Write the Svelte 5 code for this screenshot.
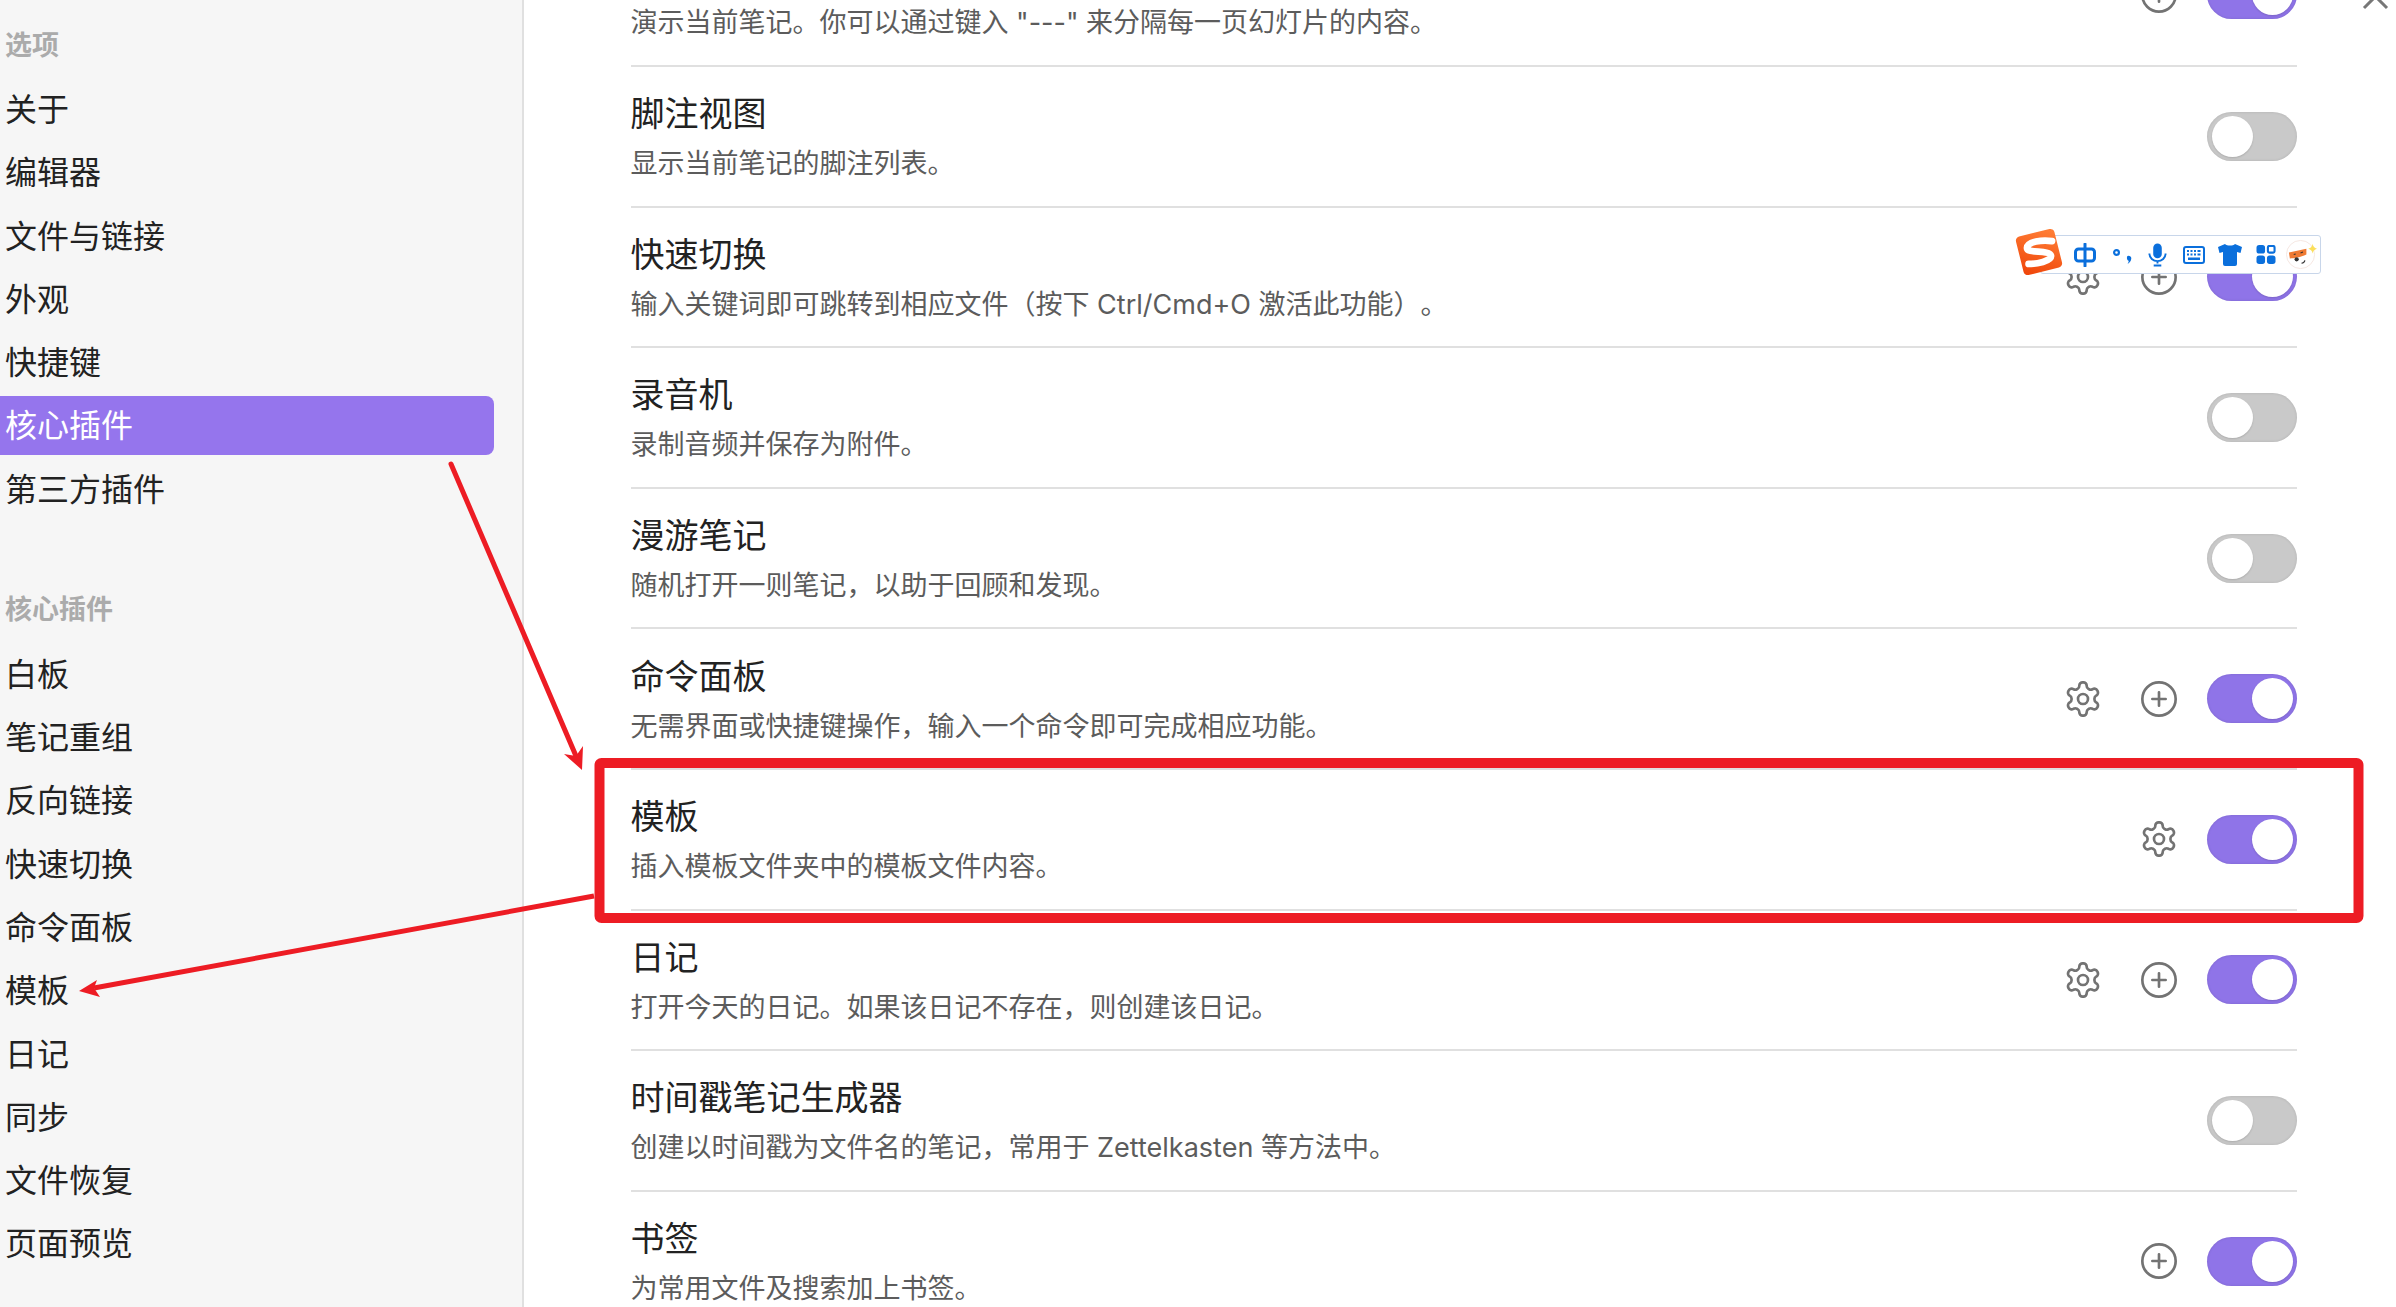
<script>
  const general = ['关于', '编辑器', '文件与链接', '外观', '快捷键', '核心插件', '第三方插件'];
  const core = ['白板', '笔记重组', '反向链接', '快速切换', '命令面板', '模板', '日记', '同步', '文件恢复', '页面预览'];
  const rows = [
    { t: '', d: '演示当前笔记。你可以通过键入 "---" 来分隔每一页幻灯片的内容。', plus: true, on: true },
    { t: '脚注视图', d: '显示当前笔记的脚注列表。' },
    { t: '快速切换', d: '输入关键词即可跳转到相应文件（按下 Ctrl/Cmd+O 激活此功能）。', gear: true, plus: true, on: true },
    { t: '录音机', d: '录制音频并保存为附件。' },
    { t: '漫游笔记', d: '随机打开一则笔记，以助于回顾和发现。' },
    { t: '命令面板', d: '无需界面或快捷键操作，输入一个命令即可完成相应功能。', gear: true, plus: true, on: true },
    { t: '模板', d: '插入模板文件夹中的模板文件内容。', gear: true, on: true },
    { t: '日记', d: '打开今天的日记。如果该日记不存在，则创建该日记。', gear: true, plus: true, on: true },
    { t: '时间戳笔记生成器', d: '创建以时间戳为文件名的笔记，常用于 Zettelkasten 等方法中。' },
    { t: '书签', d: '为常用文件及搜索加上书签。', plus: true, on: true }
  ];
</script>

<div class="page">
  <aside class="side">
    <div class="head">选项</div>
    <nav class="group">
      {#each general as n}
        <div class="item" class:active={n === '核心插件'}>{n}</div>
      {/each}
    </nav>
    <div class="head second">核心插件</div>
    <nav class="group">
      {#each core as n}
        <div class="item">{n}</div>
      {/each}
    </nav>
  </aside>

  <main class="main">
    {#each rows as r}
      <section class="row">
        <div class="info">
          <div class="title">{r.t}</div>
          <div class="desc">{r.d}</div>
        </div>
        <div class="ctrl">
          {#if r.gear}
            <svg class="ic" viewBox="0 0 24 24"><path d="M12.22 2h-.44a2 2 0 0 0-2 2v.18a2 2 0 0 1-1 1.73l-.43.25a2 2 0 0 1-2 0l-.15-.08a2 2 0 0 0-2.73.73l-.22.38a2 2 0 0 0 .73 2.73l.15.1a2 2 0 0 1 1 1.72v.51a2 2 0 0 1-1 1.74l-.15.09a2 2 0 0 0-.73 2.73l.22.38a2 2 0 0 0 2.73.73l.15-.08a2 2 0 0 1 2 0l.43.25a2 2 0 0 1 1 1.73V20a2 2 0 0 0 2 2h.44a2 2 0 0 0 2-2v-.18a2 2 0 0 1 1-1.73l.43-.25a2 2 0 0 1 2 0l.15.08a2 2 0 0 0 2.73-.73l.22-.39a2 2 0 0 0-.73-2.73l-.15-.08a2 2 0 0 1-1-1.74v-.5a2 2 0 0 1 1-1.74l.15-.09a2 2 0 0 0 .73-2.73l-.22-.38a2 2 0 0 0-2.73-.73l-.15.08a2 2 0 0 1-2 0l-.43-.25a2 2 0 0 1-1-1.73V4a2 2 0 0 0-2-2z"/><circle cx="12" cy="12" r="3"/></svg>
          {/if}
          {#if r.plus}
            <svg class="ic" viewBox="0 0 24 24"><circle cx="12" cy="12" r="10"/><path d="M8 12h8M12 8v8"/></svg>
          {/if}
          <div class="toggle" class:on={r.on}><span class="knob"></span></div>
        </div>
      </section>
    {/each}
  </main>

  <svg class="close" viewBox="0 0 32 14"><path d="M4 12 L15.500 0.500 L27 12"/></svg>

  <div class="ime">
    <svg class="logo" viewBox="0 0 48 48">
      <defs><linearGradient id="lg" x1="0.800" y1="0" x2="0.200" y2="1"><stop offset="0" stop-color="#ff7d35"/><stop offset="1" stop-color="#f0480c"/></linearGradient></defs>
      <rect x="5" y="5" width="38" height="38" rx="4" fill="url(#lg)" transform="rotate(-14 24 24)"/>
      <path d="M36.500 13.500 C27 12 13 14 12.500 20 C12 26 34 21.500 35.500 27.500 C36.500 33 21 35.500 14 35.500" fill="none" stroke="#fff" stroke-width="6.500" stroke-linecap="round"/>
    </svg>
    <svg class="zh" viewBox="0 0 22 24" role="img" aria-label="中"><rect x="1.500" y="6" width="19" height="12" rx="3" fill="none" stroke="#0a6fdc" stroke-width="3"/><path d="M11 1 V23" stroke="#0a6fdc" stroke-width="3" stroke-linecap="round"/></svg>
    <svg class="punc" viewBox="0 0 20 16"><circle cx="3.500" cy="4.500" r="2.400" fill="none" stroke="#0a6fdc" stroke-width="2.200"/><path d="M14.500 8 a2.600 2.600 0 0 1 3.800 2.600 C18.200 13 16.500 15.300 14.500 16 C15.400 14.500 15.900 13.500 15.600 12.800 C14 12.400 13.400 9.300 14.500 8z" fill="#0a6fdc"/></svg>
    <svg class="mic" viewBox="0 0 20 24"><rect x="5.500" y="0" width="9" height="15.500" rx="4.500" fill="#0a6fdc"/><path d="M1.500 10.500 a8.500 8 0 0 0 17 0 M10 18.500 v2.500 M6 23 h8" fill="none" stroke="#0a6fdc" stroke-width="2"/></svg>
    <svg class="kbd" viewBox="0 0 22 18"><rect x="1" y="1" width="20" height="16" rx="2" fill="none" stroke="#0a6fdc" stroke-width="2"/><path d="M4 4h2v2h-2zM7.500 4h2v2h-2zM11 4h2v2h-2zM14.500 4h3v2h-3zM4 7.500h2v2h-2zM7.500 7.500h2v2h-2zM11 7.500h2v2h-2zM14.500 7.500h3v2h-3zM5 11.500h12v2.500h-12z" fill="#0a6fdc"/></svg>
    <svg class="shirt" viewBox="0 0 24 22"><path d="M7 0 C9 2 15 2 17 0 L24 3 L22.500 9 L19 8 L19 20 a2 2 0 0 1 -2 2 H7 a2 2 0 0 1 -2 -2 L5 8 L1.500 9 L0 3z" fill="#0a6fdc"/></svg>
    <svg class="grid" viewBox="0 0 20 20"><rect x="0" y="0" width="9" height="9" rx="2.800" fill="#0a6fdc"/><rect x="12" y="1" width="7" height="7" rx="1.500" fill="none" stroke="#0a6fdc" stroke-width="2.200"/><rect x="0" y="11" width="9" height="9" rx="2.800" fill="#0a6fdc"/><rect x="11" y="11" width="9" height="9" rx="2.800" fill="#0a6fdc"/></svg>
    <svg class="face" viewBox="0 0 32 32">
      <circle cx="15" cy="16" r="14.500" fill="#fff" stroke="#f5e6e1" stroke-width="1"/>
      <path d="M3 14 L21 10 L21 16 C15 19 8 20 4 20z" fill="#ef7a32"/>
      <circle cx="11" cy="21" r="2.200" fill="#333"/>
      <path d="M15 14.500 l2.500 -1 M8 16 l2 -.5 M16 25 q3 -.5 3.500 -3" fill="none" stroke="#333" stroke-width="1.200"/>
      <path d="M27.500 5 Q28 9 32 10 Q28 11 27.500 15 Q27 11 23 10 Q27 9 27.500 5z" fill="#fbdf5b"/>
    </svg>
  </div>

  <svg class="marks" viewBox="0 0 2396 1307">
    <rect x="599.500" y="763" width="1759" height="155" rx="2" fill="none" stroke="#ed1c24" stroke-width="10"/>
    <path d="M451 464 L576 756" fill="none" stroke="#ed1c24" stroke-width="5" stroke-linecap="round"/>
    <polygon points="582,770 564,754 576,756 583,746" fill="#ed1c24"/>
    <path d="M594 896 L94 988" fill="none" stroke="#ed1c24" stroke-width="5"/>
    <polygon points="79,991 97,980 94,988 100,997" fill="#ed1c24"/>
  </svg>
</div>

<style>
  :global(body) { margin: 0; background: #fff; }
  .page {
    position: relative;
    display: flex;
    width: 2396px;
    height: 1307px;
    overflow: hidden;
    background: #fff;
    font-family: "Inter", "Noto Sans CJK SC", sans-serif;
    text-spacing-trim: space-all;
  }
  .side {
    box-sizing: border-box;
    flex: none;
    width: 523.500px;
    height: 100%;
    padding: 30.500px 28px 0 0;
    background: #f6f6f6;
    border-right: 2px solid #e0e0e0;
  }
  .head {
    height: 30px;
    line-height: 30px;
    padding-left: 5px;
    margin-bottom: 19.500px;
    font-size: 27px;
    font-weight: 700;
    color: #ababab;
  }
  .head.second { margin-top: 76px; margin-bottom: 20px; }
  .group { display: flex; flex-direction: column; gap: 4.300px; }
  .item {
    height: 59px;
    line-height: 59px;
    padding-left: 5px;
    font-size: 32px;
    color: #222;
    border-radius: 0 8px 8px 0;
  }
  .item.active { background: #9575ed; color: #fff; }

  .main {
    flex: 1;
    box-sizing: border-box;
    height: 100%;
    padding: 0 99px 0 107px;
    margin-top: -75.600px;
  }
  .row {
    box-sizing: border-box;
    height: 140.600px;
    display: flex;
    align-items: center;
    justify-content: space-between;
    border-top: 2px solid #e0e0e0;
  }
  .row:first-child { border-top: 0; }
  .info { padding-top: 6px; }
  .title { font-size: 34px; line-height: 48px; min-height: 48px; color: #222; }
  .desc { font-size: 27px; line-height: 48px; margin-top: 2px; color: #5c5c5c; }
  .ctrl { display: flex; align-items: center; gap: 36px; }
  .ic {
    width: 40px;
    height: 40px;
    fill: none;
    stroke: #737373;
    stroke-width: 1.600;
    stroke-linecap: round;
    stroke-linejoin: round;
  }
  .toggle {
    box-sizing: border-box;
    position: relative;
    width: 90px;
    height: 49px;
    margin-left: -8px;
    border-radius: 25px;
    background: #c9c9c9;
    box-shadow: inset 0 0 3px rgba(0, 0, 0, 0.12);
  }
  .toggle.on { background: #8f74e8; }
  .knob {
    position: absolute;
    top: 4px;
    left: 4.500px;
    width: 41px;
    height: 41px;
    border-radius: 50%;
    background: #fff;
    box-shadow: 0 1px 2px rgba(0, 0, 0, 0.15);
  }
  .toggle.on .knob { left: auto; right: 4.500px; }

  .close {
    position: absolute;
    left: 2360px;
    top: -4px;
    width: 32px;
    height: 14px;
    fill: none;
    stroke: #777;
    stroke-width: 3;
  }

  .ime {
    position: absolute;
    left: 2040px;
    top: 235px;
    box-sizing: border-box;
    width: 281px;
    height: 39px;
    display: flex;
    align-items: center;
    padding-left: 33px;
    background: #fff;
    border: 1.500px solid #c8d6ea;
    border-radius: 3px;
  }
  .logo { position: absolute; left: -27px; top: -9px; width: 50px; height: 50px; }
  .zh { width: 22px; height: 24px; margin-right: 17px; }
  .punc { width: 20px; height: 16px; margin-right: 15px; margin-top: 2px; }
  .mic { width: 19px; height: 24px; margin-right: 16px; }
  .kbd { width: 22px; height: 18px; margin-right: 13px; }
  .shirt { width: 24px; height: 22px; margin-right: 14px; }
  .grid { width: 20px; height: 19px; margin-right: 10px; }
  .face { width: 31px; height: 31px; }

  .marks { position: absolute; inset: 0; width: 2396px; height: 1307px; pointer-events: none; }
</style>
